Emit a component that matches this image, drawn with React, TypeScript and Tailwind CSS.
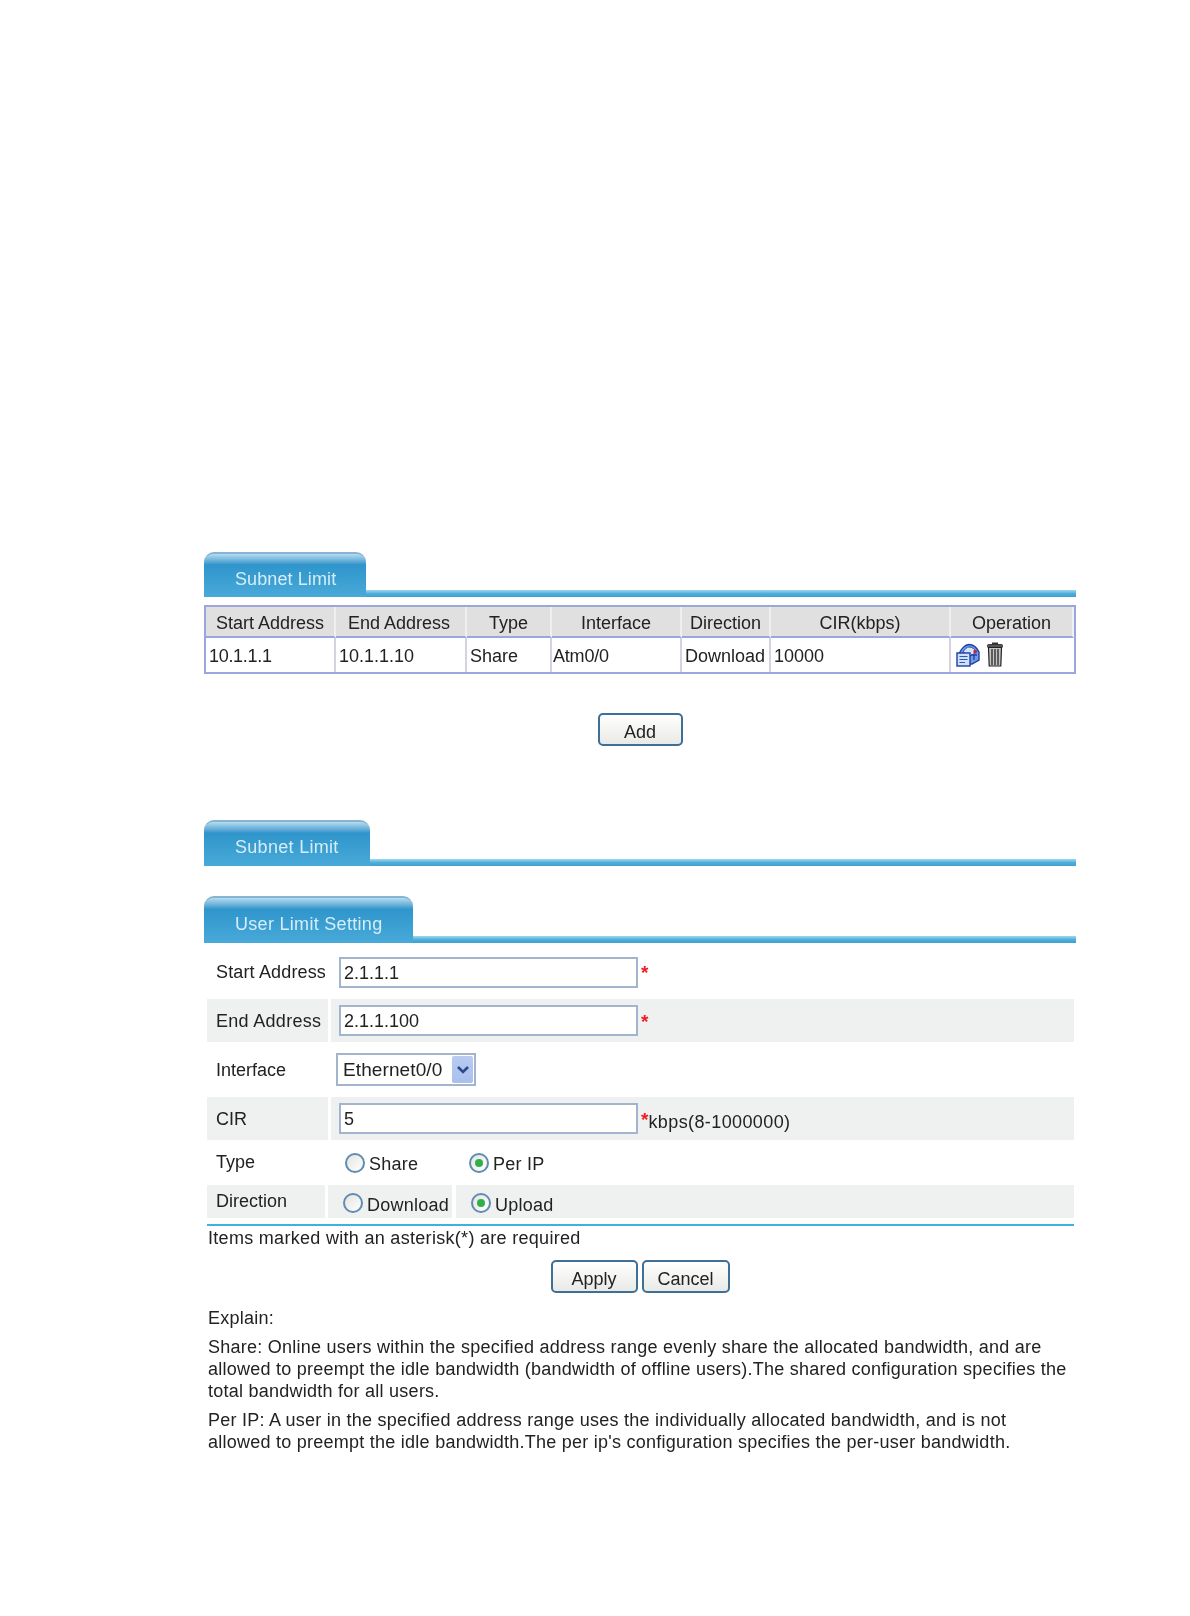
import React from 'react';

const Tab = ({ title, width, height = 'h-[45px]', tight }: { title: string; width: string; height?: string; tight?: boolean }) => (
  <div className={`flex items-end ${height}`}>
    <div className={`${width} h-full rounded-t-[10px] border-t-2 border-[#86b4d2] bg-linear-to-b from-[#b4dcef] via-[#2f95cb] via-25% to-[#48aad9] pl-[31px] flex items-center pt-[6px] text-[#d6edf8] ${tight ? 'tracking-[0.1px]' : 'tracking-[0.3px]'}`}>
      {title}
    </div>
    <div className="flex-1 h-[7px] bg-linear-to-b from-[#9fd8f0] via-[#4fb0dc] to-[#3f9fd0]" />
  </div>
);

const FlatButton = ({ label, width }: { label: string; width: string }) => (
  <button className={`${width} h-[33px] rounded-[5px] border-2 border-[#3f6f96] bg-linear-to-b from-white to-[#e9e9e6] text-[#222] pt-[4px]`}>
    {label}
  </button>
);

const TextBox = ({ value }: { value: string }) => (
  <input
    readOnly
    defaultValue={value}
    className="w-[299px] h-[31px] border-2 border-[#a3b4cf] bg-white px-[3px] pt-[2px] text-[#222] outline-none"
  />
);

const Star = () => <span className="text-[#f01c24] text-[19px] font-bold ml-[3px] mt-[2px]">*</span>;

const Radio = ({ checked, label, className = '' }: { checked?: boolean; label: string; className?: string }) => (
  <div className={`flex items-center ${className}`}>
    <div className="w-[20px] h-[20px] rounded-full border-2 border-[#5f8cb0] bg-linear-to-br from-[#e4e4e0] to-white flex items-center justify-center shrink-0">
      {checked && <div className="w-[8px] h-[8px] rounded-full bg-[#2fb04a]" />}
    </div>
    <span className="ml-[4px] mt-[3px] text-[#222] tracking-[0.25px]">{label}</span>
  </div>
);

const EditIcon = () => (
  <svg width="24" height="24" viewBox="0 0 24 24" className="shrink-0">
    <path d="M3 11 C5 6 9 1.5 13 1.5 C17 1.5 21 5 23 9 L23 17 L16 21 L3 21 Z" fill="#6f9be0" stroke="#1f3fa8" strokeWidth="1.4" />
    <path d="M7 9 C9 6 11 4 13 4 C16 4 19 6 21 9 L14 13 Z" fill="#d6e4fa" stroke="#2f55b5" strokeWidth="1" />
    <rect x="17.5" y="7" width="3" height="3" fill="#d0203a" />
    <rect x="1" y="10" width="13" height="13" fill="#cfe0fa" stroke="#1c3ca5" strokeWidth="1.4" />
    <path d="M3.5 13.5 H11.5 M3.5 16.5 H11.5 M3.5 19.5 H9" stroke="#2f55b5" strokeWidth="1.2" />
    <path d="M15 12 H21 M18 12 V17" stroke="#1f3fa8" strokeWidth="1.3" />
  </svg>
);

const TrashIcon = () => (
  <svg width="16" height="25" viewBox="0 0 16 25" className="shrink-0 ml-[7px] -mt-[2px]">
    <rect x="5" y="0.5" width="6" height="2" fill="#333" />
    <rect x="0.5" y="2.5" width="15" height="3" rx="1" fill="#555" stroke="#222" strokeWidth="0.8" />
    <path d="M1.5 5.5 H14.5 L13.8 24 H2.2 Z" fill="#c4c4c4" stroke="#222" strokeWidth="1.2" />
    <path d="M5 7 V23 M8 7 V23 M11 7 V23" stroke="#444" strokeWidth="1.6" />
  </svg>
);

const th = 'h-[31px] border-r-2 border-b-2 border-r-[#f0f0f2] border-b-[#9aa6dc] bg-[#e0e0e0] font-normal text-[#222] text-center pt-[3px]';
const td = 'h-[34px] border-r-2 border-[#d4d4dc] bg-white text-left pl-[3px] pt-[1px] text-[#222]';
const shaded = 'bg-[#eff0f0] flex items-center';

export default function App() {
  return (
    <div className="w-[1190px] h-[1616px] bg-white pt-[552px] pl-[204px] text-[18px] leading-[22px] blur-[0.4px] font-['Liberation_Sans',Arial,sans-serif]">
      <div className="w-[872px]">
        <Tab title="Subnet Limit" width="w-[162px]" tight />

        <div className="mt-2 w-[872px] border-2 border-[#9aa6dc]">
          <table className="table-fixed w-full border-separate border-spacing-0">
            <colgroup>
              <col className="w-[130px]" />
              <col className="w-[131px]" />
              <col className="w-[85px]" />
              <col className="w-[130px]" />
              <col className="w-[89px]" />
              <col className="w-[180px]" />
              <col className="w-[123px]" />
            </colgroup>
            <thead>
              <tr>
                <th className={th}>Start Address</th>
                <th className={th}><span className="-ml-[3px]">End Address</span></th>
                <th className={th}>Type</th>
                <th className={th}>Interface</th>
                <th className={th}>Direction</th>
                <th className={th}>CIR(kbps)</th>
                <th className={`${th} border-r-0`}>Operation</th>
              </tr>
            </thead>
            <tbody>
              <tr>
                <td className={td}><span className="tracking-[-0.3px]">10.1.1.1</span></td>
                <td className={td}>10.1.1.10</td>
                <td className={td}>Share</td>
                <td className={td}><span className="-ml-[2px] tracking-[-0.2px]">Atm0/0</span></td>
                <td className={td}>Download</td>
                <td className={td}>10000</td>
                <td className="h-[34px] pl-[5px]">
                  <div className="flex items-center">
                    <EditIcon />
                    <TrashIcon />
                  </div>
                </td>
              </tr>
            </tbody>
          </table>
        </div>

        <div className="mt-[39px] flex justify-center">
          <FlatButton label="Add" width="w-[85px]" />
        </div>

        <div className="mt-[74px]">
          <Tab title="Subnet Limit" width="w-[166px]" height="h-[46px]" />
        </div>
        <div className="mt-[30px]">
          <Tab title="User Limit Setting" width="w-[209px]" height="h-[47px]" />
        </div>

        {/* Form rows */}
        <div className="ml-[3px] w-[867px] text-[#222]">
          <div className="flex items-center h-[56px] pt-[2px]">
            <div className="w-[121px] pl-[9px] whitespace-nowrap tracking-[0.15px]">Start Address</div>
            <div className="ml-[3px] pl-[8px] flex items-center">
              <TextBox value="2.1.1.1" />
              <Star />
            </div>
          </div>

          <div className="flex h-[43px]">
            <div className={`w-[121px] pl-[9px] whitespace-nowrap tracking-[0.3px] ${shaded}`}>End Address</div>
            <div className={`ml-[3px] pl-[8px] flex-1 ${shaded}`}>
              <TextBox value="2.1.1.100" />
              <Star />
            </div>
          </div>

          <div className="flex items-center h-[55px]">
            <div className="w-[121px] pl-[9px]">Interface</div>
            <div className="ml-[3px] pl-[5px]">
              <div className="w-[140px] h-[33px] border-2 border-[#a3b4cf] bg-white flex items-center justify-between pl-[5px] pr-[1px] text-[19px] tracking-[0.1px]">
                <span>Ethernet0/0</span>
                <div className="w-[21px] h-[27px] rounded-[2px] bg-linear-to-b from-[#b9cbf0] to-[#a9bfec] flex items-center justify-center">
                  <svg width="14" height="10" viewBox="0 0 14 10">
                    <path d="M2 2 L7 7 L12 2" fill="none" stroke="#2a4a8c" strokeWidth="2.6" />
                  </svg>
                </div>
              </div>
            </div>
          </div>

          <div className="flex h-[43px]">
            <div className={`w-[121px] pl-[9px] ${shaded}`}>CIR</div>
            <div className={`ml-[3px] pl-[8px] flex-1 ${shaded}`}>
              <TextBox value="5" />
              <Star />
              <span className="mt-[7px] tracking-[0.4px]">kbps(8-1000000)</span>
            </div>
          </div>

          <div className="flex items-center h-[45px]">
            <div className="w-[121px] pl-[9px] -mt-[1px]">Type</div>
            <div className="ml-[3px] flex items-center">
              <Radio label="Share" className="ml-[14px] w-[124px]" />
              <Radio checked label="Per IP" />
            </div>
          </div>

          <div className="flex h-[33px]">
            <div className={`w-[118px] pl-[9px] pb-[1px] ${shaded}`}>Direction</div>
            <div className={`ml-[3px] w-[124px] pl-[15px] pt-[3px] ${shaded}`}>
              <Radio label="Download" className="whitespace-nowrap" />
            </div>
            <div className={`ml-[4px] pl-[15px] flex-1 pt-[3px] ${shaded}`}>
              <Radio checked label="Upload" />
            </div>
          </div>

          <div className="mt-[6px] h-[2px] bg-[#3fb0e0]" />
          <div className="mt-px pl-px tracking-[0.3px]">Items marked with an asterisk(*) are required</div>
        </div>

        <div className="mt-[11px] flex justify-center gap-[4px]">
          <FlatButton label="Apply" width="w-[87px]" />
          <FlatButton label="Cancel" width="w-[88px]" />
        </div>

        {/* Explain text */}
        <div className="mt-[14px] ml-[4px] text-[#222] whitespace-nowrap tracking-[0.25px]">
          <p>Explain:</p>
          <p className="mt-[7px]">
            Share: Online users within the specified address range evenly share the allocated bandwidth, and are<br />
            allowed to preempt the idle bandwidth (bandwidth of offline users).The shared configuration specifies the<br />
            total bandwidth for all users.
          </p>
          <p className="mt-[7px]">
            Per IP: A user in the specified address range uses the individually allocated bandwidth, and is not<br />
            allowed to preempt the idle bandwidth.The per ip's configuration specifies the per-user bandwidth.
          </p>
        </div>
      </div>
    </div>
  );
}
